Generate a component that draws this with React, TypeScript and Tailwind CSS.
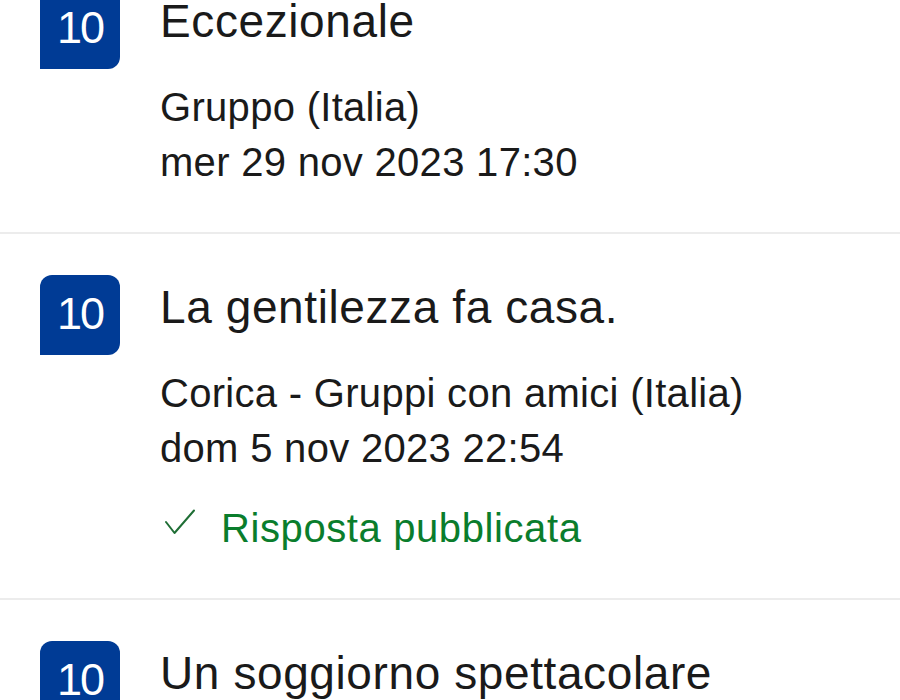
import React from 'react';

interface Review {
  score: number;
  title: string;
  guest: string;
  date: string;
  replied?: boolean;
}

const reviews: Review[] = [
  { score: 10, title: 'Eccezionale', guest: 'Gruppo (Italia)', date: 'mer 29 nov 2023 17:30' },
  {
    score: 10,
    title: 'La gentilezza fa casa.',
    guest: 'Corica - Gruppi con amici (Italia)',
    date: 'dom 5 nov 2023 22:54',
    replied: true,
  },
  { score: 10, title: 'Un soggiorno spettacolare', guest: 'Famiglia (Italia)', date: 'sab 4 nov 2023 10:12' },
];

const CheckIcon = () => (
  <svg width="30" height="26" viewBox="0 0 30 26" fill="none" className="ml-[5px] -mt-[14px] shrink-0">
    <path d="M1 13 L9.5 24 L29 1.5" stroke="#1f6e35" strokeWidth="2" strokeLinecap="round" strokeLinejoin="round" />
  </svg>
);

const ReviewRow: React.FC<{ review: Review }> = ({ review }) => (
  <div className="flex gap-[40px] pl-[40px] pt-[41px] pb-[42px] border-b-2 border-[#ececec]">
    <div className="w-[80px] h-[80px] shrink-0 bg-[#003b95] rounded-tl-[12px] rounded-tr-[12px] rounded-br-[12px] flex items-center justify-center pb-[3px] text-white text-[45px] leading-none tracking-[-2px]">
      {review.score}
    </div>
    <div className="flex flex-col text-[#1a1a1a]">
      <div className="mt-[4px] text-[46px] leading-[56px] h-[56px] whitespace-nowrap tracking-[0.6px]">{review.title}</div>
      <div className="mt-[31px] text-[40px] leading-[55px] tracking-[0.3px] whitespace-nowrap">
        <div>{review.guest}</div>
        <div>{review.date}</div>
      </div>
      {review.replied && (
        <div className="mt-[25px] h-[55px] flex items-center gap-[26px] text-[40px] leading-[55px] tracking-[0.6px] text-[#0a7d2c]">
          <CheckIcon />
          <span>Risposta pubblicata</span>
        </div>
      )}
    </div>
  </div>
);

export default function App() {
  return (
    <div className="w-[900px] h-[700px] overflow-hidden bg-white" style={{ fontFamily: '"Liberation Sans", Arial, sans-serif' }}>
      <div className="-mt-[52px]">
        {reviews.map((r, i) => (
          <ReviewRow key={i} review={r} />
        ))}
      </div>
    </div>
  );
}
